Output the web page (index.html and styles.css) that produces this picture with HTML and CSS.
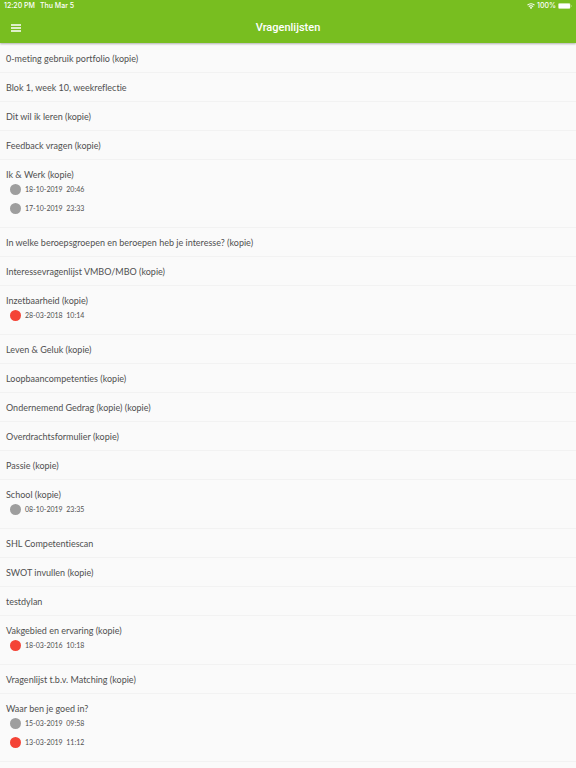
FILE: index.html
```html
<!DOCTYPE html>
<html lang="nl">
<head>
<meta charset="utf-8">
<meta name="viewport" content="width=device-width, initial-scale=1">
<title>Vragenlijsten</title>
<link rel="stylesheet" href="styles.css">
</head>
<body>
<header class="app-header">
  <div class="status">
    <div class="status-group status-left"><span>12:20 PM</span><span>Thu Mar 5</span></div>
    <div class="status-group">
      <svg class="wifi" viewBox="0 0 16 12" aria-hidden="true"><path d="M1 4.400a10 10 0 0 1 14 0M3.600 7.200a6.200 6.200 0 0 1 8.800 0" fill="none" stroke="currentColor" stroke-width="2.200"/><path d="M8 12 5.400 9.300a3.700 3.700 0 0 1 5.200 0z" fill="currentColor"/></svg>
      <span>100%</span>
      <svg class="battery" viewBox="0 0 28 12" aria-hidden="true"><rect x="0.500" y="0.500" width="24" height="11" rx="3" fill="none" stroke="currentColor" opacity="0.6"/><rect x="1" y="1" width="23" height="10" rx="2" fill="currentColor"/><path d="M26 4v4q2-2 0-4z" fill="currentColor"/></svg>
    </div>
  </div>
  <div class="toolbar">
    <button class="menu" type="button" aria-label="Menu"><svg viewBox="0 0 10 8" aria-hidden="true"><path d="M0 1h10M0 4h10M0 7h10" stroke="currentColor" stroke-width="1.400"/></svg></button>
    <h1>Vragenlijsten</h1>
  </div>
</header>
<main>
  <ul class="list">
    <li class="item"><a href="#">0-meting gebruik portfolio (kopie)</a></li>
    <li class="item"><a href="#">Blok 1, week 10, weekreflectie</a></li>
    <li class="item"><a href="#">Dit wil ik leren (kopie)</a></li>
    <li class="item"><a href="#">Feedback vragen (kopie)</a></li>
    <li class="item"><a href="#">Ik &amp; Werk (kopie)</a>
      <ul class="dates">
        <li><i class="dot"></i><time>18-10-2019&nbsp; 20:46</time></li>
        <li><i class="dot"></i><time>17-10-2019&nbsp; 23:33</time></li>
      </ul>
    </li>
    <li class="item"><a href="#">In welke beroepsgroepen en beroepen heb je interesse? (kopie)</a></li>
    <li class="item"><a href="#">Interessevragenlijst VMBO/MBO (kopie)</a></li>
    <li class="item"><a href="#">Inzetbaarheid (kopie)</a>
      <ul class="dates">
        <li><i class="dot open"></i><time>28-03-2018&nbsp; 10:14</time></li>
      </ul>
    </li>
    <li class="item"><a href="#">Leven &amp; Geluk (kopie)</a></li>
    <li class="item"><a href="#">Loopbaancompetenties (kopie)</a></li>
    <li class="item"><a href="#">Ondernemend Gedrag (kopie) (kopie)</a></li>
    <li class="item"><a href="#">Overdrachtsformulier (kopie)</a></li>
    <li class="item"><a href="#">Passie (kopie)</a></li>
    <li class="item"><a href="#">School (kopie)</a>
      <ul class="dates">
        <li><i class="dot"></i><time>08-10-2019&nbsp; 23:35</time></li>
      </ul>
    </li>
    <li class="item"><a href="#">SHL Competentiescan</a></li>
    <li class="item"><a href="#">SWOT invullen (kopie)</a></li>
    <li class="item"><a href="#">testdylan</a></li>
    <li class="item"><a href="#">Vakgebied en ervaring (kopie)</a>
      <ul class="dates">
        <li><i class="dot open"></i><time>18-03-2016&nbsp; 10:18</time></li>
      </ul>
    </li>
    <li class="item"><a href="#">Vragenlijst t.b.v. Matching (kopie)</a></li>
    <li class="item"><a href="#">Waar ben je goed in?</a>
      <ul class="dates">
        <li><i class="dot"></i><time>15-03-2019&nbsp; 09:58</time></li>
        <li><i class="dot open"></i><time>13-03-2019&nbsp; 11:12</time></li>
      </ul>
    </li>
  </ul>
</main>
</body>
</html>
```
FILE: styles.css
```css
* {
  box-sizing: border-box;
}

body {
  margin: 0;
  background: #fafafa;
  color: #505050;
  font-family: Lato, "Liberation Sans", sans-serif;
  font-variant-ligatures: none;
}

.app-header {
  background: #78be20;
  color: #fff;
  box-shadow: 0 1px 2px rgba(0, 0, 0, 0.3);
}

.status {
  display: flex;
  justify-content: space-between;
  padding: 0 4px;
  font-family: Inter, "Liberation Sans", sans-serif;
  font-size: 7px;
  font-weight: 500;
  line-height: 12px;
}

.status-group {
  display: flex;
  align-items: center;
  gap: 2px;
}

.status-left {
  gap: 5px;
}

.wifi {
  width: 8px;
  height: 6px;
}

.battery {
  width: 14px;
  height: 6px;
}

.toolbar {
  display: grid;
  grid-template-columns: 32px 1fr 32px;
  align-items: center;
  height: 31px;
}

.menu {
  display: flex;
  align-items: center;
  justify-content: center;
  height: 31px;
  padding: 0;
  border: 0;
  background: none;
  color: inherit;
}

.menu svg {
  width: 10px;
  height: 8px;
}

h1 {
  margin: 0;
  font-family: Roboto, "Liberation Sans", sans-serif;
  font-size: 11px;
  font-weight: 500;
  line-height: 31px;
  text-align: center;
}

.list,
.dates {
  margin: 0;
  padding: 0;
  list-style: none;
}

.list {
  padding-top: 1px;
}

.item {
  padding: 9px 6px 8px;
  border-bottom: 1px solid #f2f2f2;
  font-size: 9px;
  line-height: 11px;
}

.item a {
  display: block;
  color: inherit;
  text-decoration: none;
}

.dates {
  padding: 0 0 1px 4px;
}

.dates li {
  display: flex;
  align-items: center;
  gap: 4px;
  height: 19px;
  font-size: 7px;
}

.dot {
  width: 11px;
  height: 11px;
  border-radius: 50%;
  background: #9e9e9e;
}

.dot.open {
  background: #f44336;
}
```
